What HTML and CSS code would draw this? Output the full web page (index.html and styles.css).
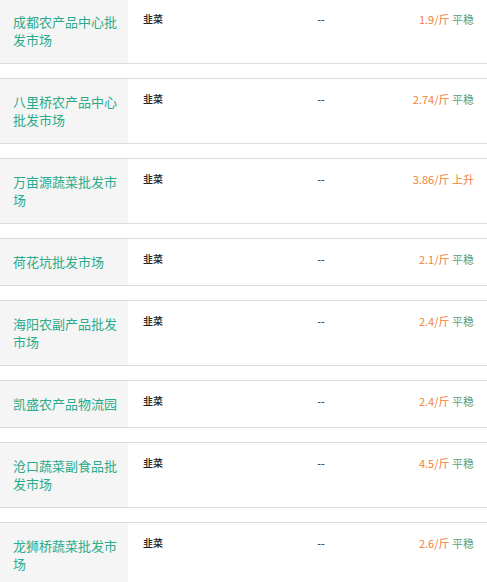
FILE: index.html
```html
<!DOCTYPE html>
<html lang="zh">
<head>
<meta charset="utf-8">
<link rel="stylesheet" href="styles.css">
</head>
<body>
<div class="list">
  <div class="row"><div class="name">成都农产品中心批发市场</div><div class="kind">韭菜</div><div class="dash">--</div><div class="price"><span class="num">1.9/斤</span> <span class="flat">平稳</span></div></div>
  <div class="row"><div class="name">八里桥农产品中心批发市场</div><div class="kind">韭菜</div><div class="dash">--</div><div class="price"><span class="num">2.74/斤</span> <span class="flat">平稳</span></div></div>
  <div class="row"><div class="name">万亩源蔬菜批发市场</div><div class="kind">韭菜</div><div class="dash">--</div><div class="price"><span class="num">3.86/斤</span> <span class="up">上升</span></div></div>
  <div class="row"><div class="name">荷花坑批发市场</div><div class="kind">韭菜</div><div class="dash">--</div><div class="price"><span class="num">2.1/斤</span> <span class="flat">平稳</span></div></div>
  <div class="row"><div class="name">海阳农副产品批发市场</div><div class="kind">韭菜</div><div class="dash">--</div><div class="price"><span class="num">2.4/斤</span> <span class="flat">平稳</span></div></div>
  <div class="row"><div class="name">凯盛农产品物流园</div><div class="kind">韭菜</div><div class="dash">--</div><div class="price"><span class="num">2.4/斤</span> <span class="flat">平稳</span></div></div>
  <div class="row"><div class="name">沧口蔬菜副食品批发市场</div><div class="kind">韭菜</div><div class="dash">--</div><div class="price"><span class="num">4.5/斤</span> <span class="flat">平稳</span></div></div>
  <div class="row"><div class="name">龙狮桥蔬菜批发市场</div><div class="kind">韭菜</div><div class="dash">--</div><div class="price"><span class="num">2.6/斤</span> <span class="flat">平稳</span></div></div>
</div>
</body>
</html>
```
FILE: styles.css
```css
html, body {
  margin: 0;
  padding: 0;
  background: #fff;
}
body {
  font-family: "Noto Sans CJK SC", "Noto Sans", sans-serif;
  overflow: hidden;
}
.list {
  margin-top: -2px;
  display: flex;
  flex-direction: column;
  gap: 14px;
}
.row {
  display: grid;
  grid-template-columns: 128px 150px 86px 1fr;
  border-top: 1px solid #dcdcdc;
  border-bottom: 1px solid #dcdcdc;
}
.name {
  background: #f5f5f5;
  color: #2aab8b;
  font-size: 13px;
  line-height: 18px;
  padding: 14px 10px 14px 13px;
}
.kind, .dash, .price {
  font-size: 11px;
  line-height: 14px;
  padding-top: 13px;
  color: #222;
}
.kind {
  padding-left: 15px;
  font-weight: 500;
  font-size: 10px;
}
.dash {
  text-align: center;
}
.price {
  text-align: right;
  padding-right: 13px;
}
.num {
  color: #ef7f3a;
}
.flat {
  color: #5a9f7e;
}
.up {
  color: #ef7f3a;
}
```
